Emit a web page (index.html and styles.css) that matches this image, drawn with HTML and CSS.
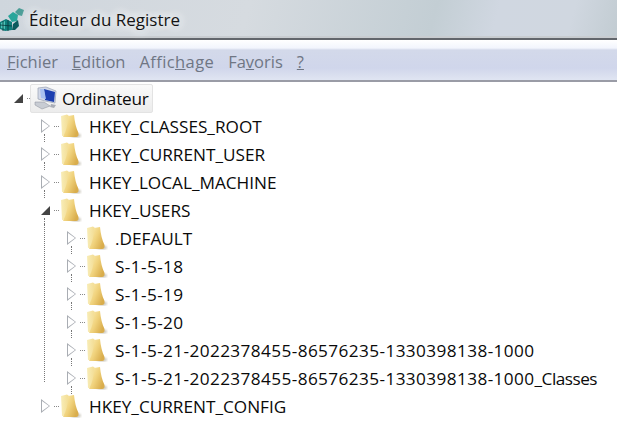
FILE: index.html
```html
<!DOCTYPE html>
<html>
<head>
  <meta charset="utf-8">
  <title>Éditeur du Registre</title>
  <link rel="stylesheet" href="styles.css">
</head>
<body>
  <svg class="defs" width="0" height="0">
    <defs>
      <linearGradient id="folderBack" x1="0" y1="0" x2="1" y2="0">
        <stop offset="0" stop-color="#f8edb8"/>
        <stop offset="1" stop-color="#f3dc92"/>
      </linearGradient>
      <linearGradient id="folderFront" x1="0" y1="0" x2="1" y2="0.6">
        <stop offset="0" stop-color="#fdf1bb"/>
        <stop offset="0.55" stop-color="#f0d27c"/>
        <stop offset="1" stop-color="#d9ad4c"/>
      </linearGradient>
      <filter id="soft" x="-20%" y="-20%" width="140%" height="140%">
        <feGaussianBlur stdDeviation="0.9"/>
      </filter>
      <symbol id="folder" viewBox="0 0 22 24">
        <ellipse cx="16" cy="21.5" rx="5" ry="2" fill="#9b9582" opacity="0.55" filter="url(#soft)"/>
        <path d="M1 2 L7 0.5 L9 2 L9 21 L2 22 Z" fill="url(#folderBack)"/>
        <path d="M8 2 L14 1 Q15 12 18.5 19 Q19 23 16 23 L3 23 Q8 14 8 2 Z" fill="url(#folderFront)"/>
      </symbol>
    </defs>
  </svg>

  <header class="titlebar">
    <svg class="app-icon" width="25" height="24" viewBox="0 0 25 24">
      <path d="M0 15 L6 12 L12 15 L12 23 L5 24 L0 22 Z" fill="#0f7f7c"/>
      <path d="M1 16 L5 14 L5 22 L1 21 Z" fill="#4fc3b8"/>
      <path d="M8 9 L13 5 L18 8 L17 14 L12 15 Z" fill="#2aa59b"/>
      <path d="M13 17 L18 13 L19 19 L15 23 L12 23 Z" fill="#0b5a5d"/>
      <path d="M15 5 L19 1 L24 3 L22 9 L18 8 Z" fill="#4b9d97"/>
      <path d="M0 18 L12 19 M3 14 L3 24 M8 13 L8 24" stroke="#07393c" stroke-width="0.8" fill="none"/>
    </svg>
    <span class="title">Éditeur du Registre</span>
  </header>

  <nav class="menubar">
    <span><u>F</u>ichier</span>
    <span><u>E</u>dition</span>
    <span class="wide">Affic<u>h</u>age</span>
    <span>Fa<u>v</u>oris</span>
    <span><u>?</u></span>
  </nav>

  <main class="tree">
    <div class="row root">
      <span class="open"></span>
      <span class="dash"></span>
      <span class="selected">
        <svg class="computer" width="25" height="24" viewBox="0 0 25 24">
          <path d="M5 2 L13 1 L23 5 L22 17 L12 15 L5 13 Z" fill="#d3d9e8" stroke="#9aa2b2" stroke-width="0.7"/>
          <path d="M11 3 L22 6 L21 16 L12 14 Z" fill="#1c3fb0"/>
          <path d="M7 3 L11 3 L13 13 L8 12 Z" fill="#a8c1f0"/>
          <path d="M2 16 L11 16 L17 20 L9 23 L2 19 Z" fill="#c8ccd3" stroke="#8a8f99" stroke-width="0.5"/>
          <path d="M18 18 L23 19 L21 22 L17 21 Z" fill="#a9adb6"/>
        </svg>
        <span class="root-label">Ordinateur</span>
      </span>
    </div>
    <div class="row lvl1 guide">
      <span class="closed"></span><span class="dash"></span>
      <svg class="folder"><use href="#folder"/></svg>
      <span>HKEY_CLASSES_ROOT</span>
    </div>
    <div class="row lvl1 guide">
      <span class="closed"></span><span class="dash"></span>
      <svg class="folder"><use href="#folder"/></svg>
      <span>HKEY_CURRENT_USER</span>
    </div>
    <div class="row lvl1 guide">
      <span class="closed"></span><span class="dash"></span>
      <svg class="folder"><use href="#folder"/></svg>
      <span>HKEY_LOCAL_MACHINE</span>
    </div>
    <div class="row lvl1 guide">
      <span class="open"></span><span class="dash"></span>
      <svg class="folder"><use href="#folder"/></svg>
      <span>HKEY_USERS</span>
    </div>
    <div class="children">
      <div class="row lvl2 guide">
        <span class="closed"></span><span class="dash"></span>
        <svg class="folder"><use href="#folder"/></svg>
        <span>.DEFAULT</span>
      </div>
      <div class="row lvl2 guide">
        <span class="closed"></span><span class="dash"></span>
        <svg class="folder"><use href="#folder"/></svg>
        <span class="sid">S-1-5-18</span>
      </div>
      <div class="row lvl2 guide">
        <span class="closed"></span><span class="dash"></span>
        <svg class="folder"><use href="#folder"/></svg>
        <span class="sid">S-1-5-19</span>
      </div>
      <div class="row lvl2 guide">
        <span class="closed"></span><span class="dash"></span>
        <svg class="folder"><use href="#folder"/></svg>
        <span class="sid">S-1-5-20</span>
      </div>
      <div class="row lvl2 guide">
        <span class="closed"></span><span class="dash"></span>
        <svg class="folder"><use href="#folder"/></svg>
        <span class="sid">S-1-5-21-2022378455-86576235-1330398138-1000</span>
      </div>
      <div class="row lvl2 guide">
        <span class="closed"></span><span class="dash"></span>
        <svg class="folder"><use href="#folder"/></svg>
        <span class="sid">S-1-5-21-2022378455-86576235-1330398138-1000<span class="suffix">_Classes</span></span>
      </div>
    </div>
    <div class="row lvl1">
      <span class="closed"></span><span class="dash"></span>
      <svg class="folder"><use href="#folder"/></svg>
      <span>HKEY_CURRENT_CONFIG</span>
    </div>
  </main>
</body>
</html>
```

FILE: styles.css
```css
html, body {
  margin: 0;
  height: 100%;
  overflow: hidden;
}

body {
  width: 617px;
  height: 433px;
  font-family: "Open Sans", sans-serif;
  background: #fff;
}

.defs {
  position: absolute;
}

.titlebar {
  height: 38px;
  box-sizing: border-box;
  display: flex;
  align-items: center;
  gap: 4px;
  padding-top: 2px;
  background: linear-gradient(105deg, #cfd6dd 0%, #d6dbe0 40%, #c3ced4 70%, #d0d7e1 80%, #d0d7e0 92%, #c2ccd2 100%);
  border-bottom: 2px solid #c8ccd0;
}

.app-icon {
  flex: none;
}

.title {
  font-size: 17px;
  color: #141414;
  text-shadow: 0 0 10px #f2f4f5, 0 0 10px #f2f4f5, 0 0 14px #f2f4f5;
}

.menubar {
  height: 44px;
  box-sizing: border-box;
  display: flex;
  align-items: center;
  gap: 14px;
  padding: 2px 0 0 7px;
  font-size: 16.5px;
  color: #6f7684;
  border-top: 2px solid #62666c;
  border-bottom: 2px solid #9a9ca6;
  background: linear-gradient(#ffffff 0, #f2f5fd 8px, #d3d9ea 10px, #d0d6eb 28px, #e0e5f2 100%);
}

.wide {
  letter-spacing: 0.4px;
}

.tree {
  font-size: 17.2px;
  color: #0a0a0a;
}

.sid {
  letter-spacing: 0.4px;
}

.suffix {
  letter-spacing: -0.5px;
}

.root-label {
  letter-spacing: -0.2px;
}

.row {
  position: relative;
  height: 28px;
  display: flex;
  align-items: center;
}

.lvl1 {
  padding-left: 41px;
}

.lvl2 {
  padding-left: 67px;
}

.root {
  padding-left: 14px;
  margin-top: 2px;
}

.guide::after {
  content: "";
  position: absolute;
  top: 22px;
  height: 8px;
  border-left: 1px dotted #777;
}

.lvl1.guide::after {
  left: 44px;
}

.lvl2.guide::after {
  left: 71px;
}

.children {
  position: relative;
}

.children::before {
  content: "";
  position: absolute;
  left: 44px;
  top: 0;
  bottom: 10px;
  border-left: 1px dotted #777;
}

.open,
.closed {
  flex: none;
  box-sizing: border-box;
}

.closed {
  width: 9px;
  height: 14px;
  border-left: 9px solid #a9adb3;
  border-top: 7px solid transparent;
  border-bottom: 7px solid transparent;
  position: relative;
}

.closed::after {
  content: "";
  position: absolute;
  left: -8px;
  top: -5px;
  border-left: 7px solid #fff;
  border-top: 5px solid transparent;
  border-bottom: 5px solid transparent;
}

.open {
  width: 9px;
  height: 9px;
  border-right: 9px solid #444;
  border-top: 9px solid transparent;
}

.dash {
  flex: none;
  width: 5px;
  margin: 0 1px 0 4px;
  border-top: 1px dotted #888;
}

.folder {
  flex: none;
  width: 22px;
  height: 24px;
  margin-right: 7px;
}

.selected {
  display: flex;
  align-items: center;
  gap: 4px;
  height: 27px;
  margin-left: -3px;
  padding: 0 3px 0 2px;
  border: 1px solid #e3e3e3;
  border-radius: 2px;
  background: linear-gradient(#fafafa, #ececec);
}
```
